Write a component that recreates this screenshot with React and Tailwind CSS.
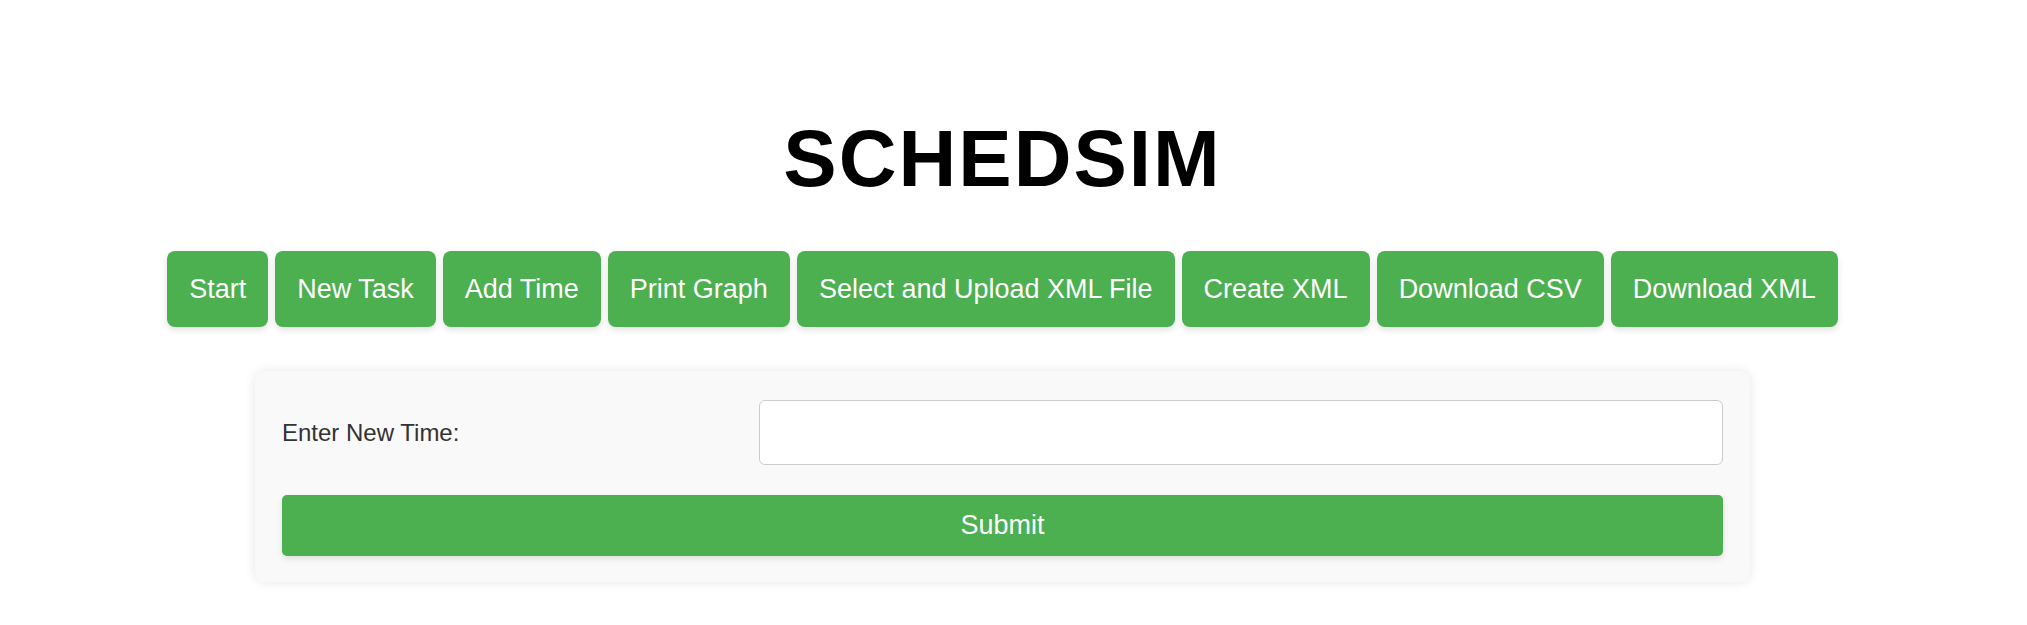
import React, { useState } from 'react';

const ACTIONS = [
  'Start',
  'New Task',
  'Add Time',
  'Print Graph',
  'Select and Upload XML File',
  'Create XML',
  'Download CSV',
  'Download XML',
];

const App = () => {
  const [time, setTime] = useState('');

  return (
    <div className="w-[2005px] min-h-[625px] bg-white flex flex-col items-center pt-[113px] font-['Liberation_Sans',Arial,sans-serif]">
      <h1 className="text-[80px] leading-[92px] font-bold tracking-[2px] text-black">SCHEDSIM</h1>

      {/* ── Toolbar ── */}
      <div className="mt-[46px] flex gap-[7px]">
        {ACTIONS.map(label => (
          <button
            key={label}
            className="h-[76px] px-[22px] rounded-[8px] bg-[#4CAF50] text-white text-[27px] leading-[31px] shadow-[0_3px_6px_rgba(0,0,0,0.12)]">
            {label}
          </button>
        ))}
      </div>

      {/* ── Time form ── */}
      <div className="mt-[44px] w-[1495px] rounded-[10px] bg-[#f9f9f9] pt-[29px] pb-[26px] px-[27px] shadow-[0_0_12px_rgba(0,0,0,0.1)]">
        <div className="flex items-center">
          <label className="w-[477px] text-[24px] text-[#333]">Enter New Time:</label>
          <input
            type="text"
            value={time}
            onChange={e => setTime(e.target.value)}
            className="flex-1 h-[65px] rounded-[6px] border border-[#ccc] bg-white px-[13px] text-[26px] outline-none"
          />
        </div>
        <button className="mt-[30px] w-full h-[61px] rounded-[5px] bg-[#4CAF50] text-white text-[27px] shadow-[0_3px_6px_rgba(0,0,0,0.1)]">
          Submit
        </button>
      </div>
    </div>
  );
};

export default App;
